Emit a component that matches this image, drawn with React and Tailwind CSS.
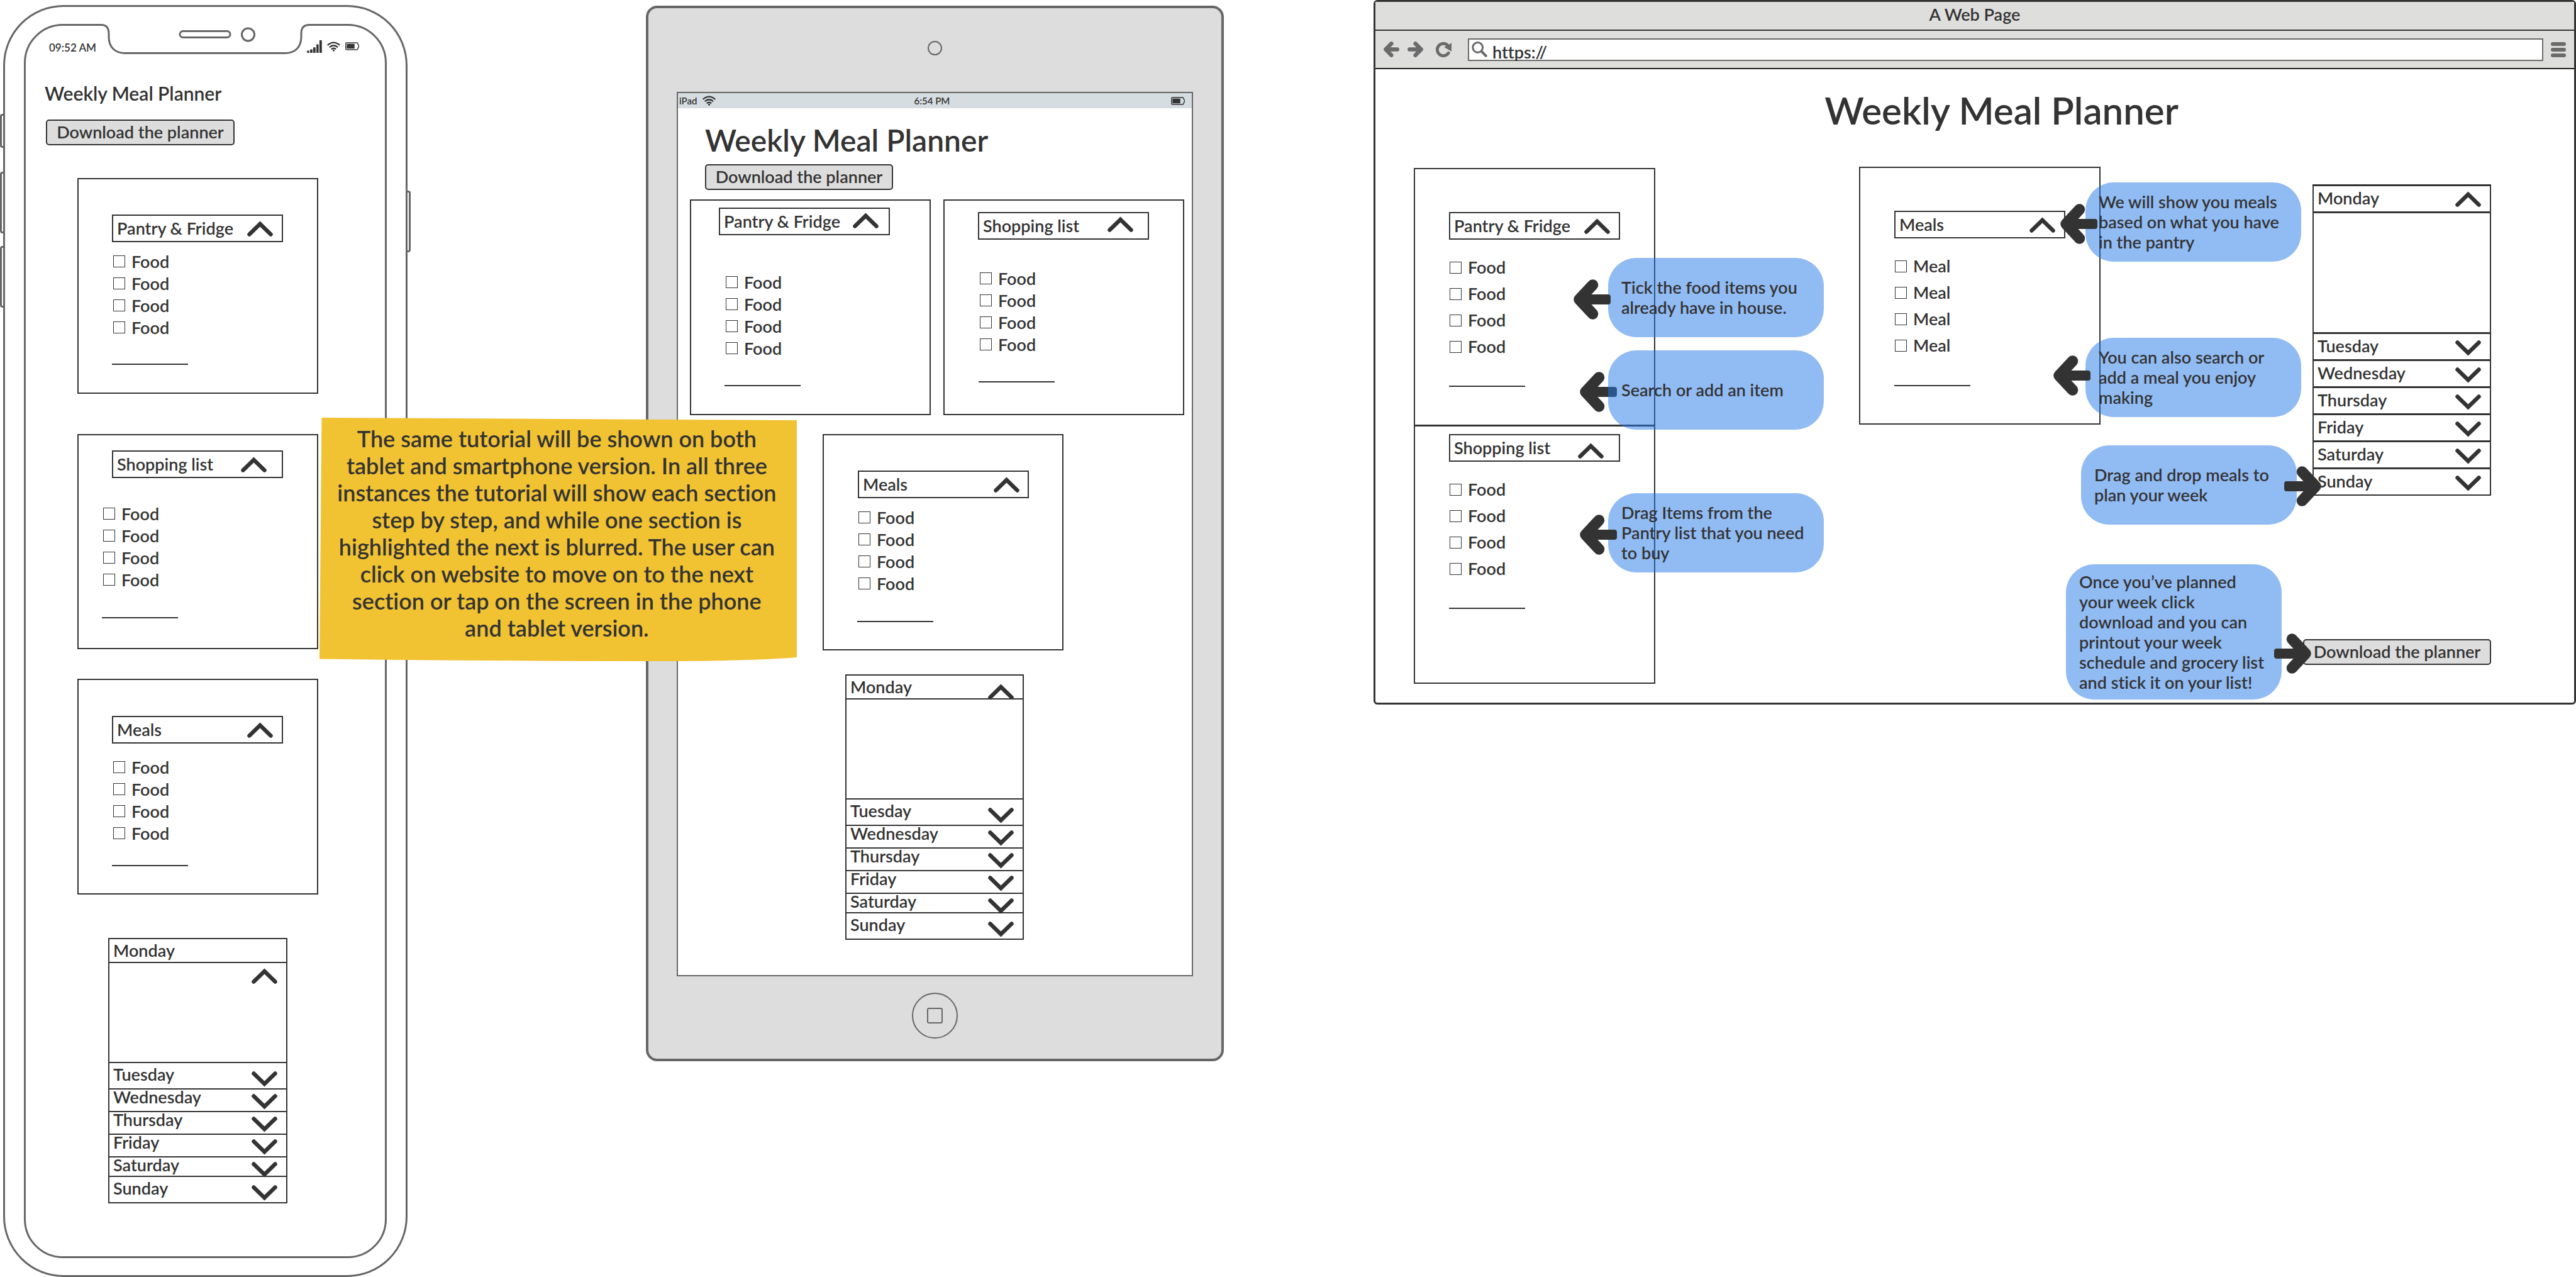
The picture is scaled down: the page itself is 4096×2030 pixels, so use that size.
const DAYS = ["Tuesday", "Wednesday", "Thursday", "Friday", "Saturday", "Sunday"];
const FOOD = ["Food", "Food", "Food", "Food"];
const MEAL = ["Meal", "Meal", "Meal", "Meal"];

/* ---------- drawings ---------- */

function Chevron({ up, className = "" }) {
  return (
    <svg viewBox="0 0 41 25" className={`h-[25px] w-[41px] shrink-0 ${className}`} aria-hidden="true">
      <polyline
        points={up ? "3.5,21.5 20.5,5 37.5,21.5" : "3.5,3.5 20.5,20 37.5,3.5"}
        fill="none"
        stroke="#333"
        strokeWidth="6.5"
        strokeLinecap="round"
      />
    </svg>
  );
}

function BigArrow({ right, className = "" }) {
  return (
    <svg viewBox="0 0 60 64" className={`h-16 w-[60px] shrink-0 ${className}`} aria-hidden="true">
      <g transform={right ? "translate(60 0) scale(-1 1)" : undefined}>
        <polyline points="31.5,9 10,32 31.5,55" fill="none" stroke="#333" strokeWidth="17.5" strokeLinecap="round" strokeLinejoin="round" />
        <rect x="14" y="24" width="46" height="16" rx="4" fill="#333" />
      </g>
    </svg>
  );
}

function NavArrow({ right }) {
  return (
    <svg viewBox="0 0 97 97" className="size-[25px]" aria-hidden="true">
      <g transform={right ? "translate(97 0) scale(-1 1)" : undefined} fill="none" stroke="#6b6b6b" strokeWidth="25" strokeLinecap="round" strokeLinejoin="round">
        <polyline points="48,13 13,48.5 48,84" />
        <line x1="16" y1="48.5" x2="84" y2="48.5" />
      </g>
    </svg>
  );
}

function Reload() {
  return (
    <svg viewBox="0 0 98 97" className="size-[25px]" aria-hidden="true">
      <path d="M70 20 A38 38 0 1 0 79 71" fill="none" stroke="#6b6b6b" strokeWidth="19" strokeLinecap="round" />
      <polygon points="98,8 98,61 52,35" fill="#6b6b6b" />
    </svg>
  );
}

function Search() {
  return (
    <svg viewBox="0 0 98 98" className="size-[25px] shrink-0" aria-hidden="true">
      <circle cx="38" cy="37" r="31" fill="none" stroke="#6b6b6b" strokeWidth="12" />
      <line x1="62" y1="62" x2="89" y2="89" stroke="#6b6b6b" strokeWidth="16" strokeLinecap="round" />
    </svg>
  );
}

function Signal() {
  return (
    <svg viewBox="0 0 92 78" className="h-5 w-6" fill="#333" aria-hidden="true">
      <rect x="0" y="64" width="14" height="14" rx="2" />
      <rect x="19" y="57" width="15" height="21" rx="2" />
      <rect x="38" y="44" width="15" height="34" rx="2" />
      <rect x="58" y="25" width="14" height="53" rx="2" />
      <rect x="77" y="0" width="15" height="78" rx="2" />
    </svg>
  );
}

function Wifi() {
  return (
    <svg viewBox="0 0 83 62" className="h-4 w-[21px]" aria-hidden="true">
      <g fill="none" stroke="#333" strokeWidth="9">
        <path d="M3 23 Q41.5 -11 80 23" />
        <path d="M15 36 Q41.5 12 68 36" />
        <path d="M27 48 Q41.5 35 56 48" />
      </g>
      <circle cx="41.5" cy="55" r="6.5" fill="#333" />
    </svg>
  );
}

function Battery() {
  return (
    <svg viewBox="0 0 88 50" className="h-[13px] w-[22px]" aria-hidden="true">
      <path d="M8 3 H74 Q80 3 80 9 V13 Q85 14 85 19 V31 Q85 36 80 37 V41 Q80 47 74 47 H8 Q3 47 3 42 V8 Q3 3 8 3 Z" fill="none" stroke="#333" strokeWidth="5.5" />
      <rect x="9" y="10" width="50" height="30" fill="#333" />
    </svg>
  );
}

/* ---------- shared parts ---------- */

function DownloadButton({ className = "" }) {
  return (
    <button type="button" className={`flex h-[41px] items-center justify-center rounded-[5px] border-2 border-[#333] bg-[#ddd] pb-0.5 ${className}`}>
      Download the planner
    </button>
  );
}

function Card({ title, items = FOOD, className = "", header = "", chevron = "mr-3.5", list, rows = "h-[35px]", field }) {
  return (
    <section className={`border-2 border-[#333] ${className}`}>
      <button type="button" className={`flex h-11 items-center justify-between border-2 border-[#333] pl-1.5 ${header}`}>
        <span>{title}</span>
        <Chevron up className={chevron} />
      </button>
      <div className={list}>
        {items.map((item, i) => (
          <label key={i} className={`flex w-fit items-center gap-2.5 ${rows}`}>
            <input type="checkbox" className="size-[19px] appearance-none border border-[#333]" />
            {item}
          </label>
        ))}
        <input type="text" aria-label={`Add to ${title}`} className={`block h-7 w-[121px] border-b-2 border-[#333] outline-none ${field}`} />
      </div>
    </section>
  );
}

const TALL = new Set(["Monday", "Tuesday", "Sunday"]);

function DayRow({ day, up, hideChevron }) {
  const tall = TALL.has(day);
  const height = day === "Monday" ? "h-[38px]" : tall ? "h-[42px]" : day === "Saturday" ? "h-[31px]" : "h-9";
  return (
    <button type="button" className={`flex w-full items-start justify-between border-t-2 border-[#333] pr-3.5 pl-1.5 leading-6 ${height} ${tall ? "pt-1.5" : ""}`}>
      <span>{day}</span>
      {!hideChevron && <Chevron up={up} className="mt-[7px]" />}
    </button>
  );
}

function DayList({ className = "", chevronInBody }) {
  return (
    <section className={`border-2 border-t-0 border-[#333] ${className}`}>
      <DayRow day="Monday" up hideChevron={chevronInBody} />
      <div className="flex h-[159px] justify-end border-t-2 border-[#333] pt-2 pr-3.5">{chevronInBody && <Chevron up />}</div>
      {DAYS.map((d) => (
        <DayRow key={d} day={d} />
      ))}
    </section>
  );
}

function Callout({ text, className = "", arrow = "", right, bubble = "min-h-[126px]" }) {
  return (
    <div className={`absolute flex items-center ${className}`}>
      {!right && <BigArrow className={arrow} />}
      <p className={`flex w-[343px] shrink-0 items-center rounded-[45px] bg-[#2378e8]/50 pl-[21px] leading-8 whitespace-pre ${bubble}`}>{text}</p>
      {right && <BigArrow right className={arrow} />}
    </div>
  );
}

/* ---------- devices ---------- */

function Phone() {
  const leftKey = "absolute -left-2 w-2 rounded-l border-[3px] border-[#666] bg-white";
  return (
    <article className="relative mx-[5px] mt-2 rounded-[96px] border-[3px] border-[#666] px-[30px] pt-[27px] pb-[27px]">
      <span className={`${leftKey} top-[170px] h-[54px]`} />
      <span className={`${leftKey} top-[262px] h-[98px]`} />
      <span className={`${leftKey} top-[380px] h-[98px]`} />
      <span className="absolute top-[292px] -right-2 h-[98px] w-[5px] rounded-r border-[3px] border-l-0 border-[#666] bg-white" />
      <div className="relative flex flex-col rounded-[62px] border-[3px] border-[#666] pb-[84px]">
        <svg viewBox="0 0 336 50" className="absolute -top-[3px] left-1/2 h-[50px] w-[336px] -translate-x-1/2" aria-hidden="true">
          <path d="M3 0 H333 V1.5 C324 1.5 320 6 320 15 V21 C320 37 310 46.5 294 46.5 H40 C24 46.5 14 37 14 21 V16 C14 6 10 1.5 2 1.5 Z" fill="#fff" />
          <path d="M0 1.5 H2 C10 1.5 14 6 14 16 V21 C14 37 24 46.5 40 46.5 H294 C310 46.5 320 37 320 21 V15 C320 6 324 1.5 333 1.5 H336" fill="none" stroke="#666" strokeWidth="3" />
          <rect x="127" y="11.5" width="80" height="10" rx="5" fill="#fff" stroke="#666" strokeWidth="3" />
          <circle cx="235.5" cy="17" r="10" fill="#fff" stroke="#666" strokeWidth="3" />
        </svg>
        <div className="mb-[18px] flex h-[69px] items-center justify-between pr-[41px] pl-[37px]">
          <time className="text-[17px]">09:52 AM</time>
          <div className="flex items-center gap-2 pb-1">
            <Signal />
            <Wifi />
            <Battery />
          </div>
        </div>
        <h2 className="ml-[30px] text-[30px] leading-10">Weekly Meal Planner</h2>
        <DownloadButton className="mt-[22px] ml-8 w-[300px] self-start" />
        <Card title="Pantry & Fridge" className="mt-[52px] mr-[106px] ml-[82px] pt-14 pb-11" header="ml-[53px] w-[272px]" list="ml-[55px] mt-[13px]" field="-ml-0.5 mt-3.5" />
        <Card title="Shopping list" className="mt-16 mr-[106px] ml-[82px] pt-6 pb-[47px]" header="ml-[53px] w-[272px]" chevron="mr-6" list="ml-[39px] mt-[39px]" field="-ml-0.5 mt-4" />
        <Card title="Meals" className="mt-[47px] mr-[106px] ml-[82px] pt-[57px] pb-[43px]" header="ml-[53px] w-[272px]" list="ml-[55px] mt-5" field="-ml-0.5 mt-[7px]" />
        <DayList className="mt-[69px] mr-[155px] ml-[131px]" chevronInBody />
      </div>
    </article>
  );
}

function Tablet() {
  return (
    <article className="mt-[9px] flex flex-col rounded-[18px] border-4 border-[#666] bg-[#ddd] px-[45px] pt-[52px] pb-8">
      <span className="size-[23px] self-center rounded-full border-2 border-[#666]" />
      <div className="mt-[58px] flex flex-col border-2 border-[#666] bg-white pb-14">
        <div className="grid h-6 grid-cols-3 items-center bg-[#d6dde0] pr-[11px] pl-0.5 text-[15px] leading-5">
          <span className="flex items-center gap-2">
            iPad <Wifi />
          </span>
          <time className="text-center">6:54 PM</time>
          <span className="flex justify-end">
            <Battery />
          </span>
        </div>
        <h2 className="mt-[21px] ml-[43px] text-[48px] leading-[60px]">Weekly Meal Planner</h2>
        <DownloadButton className="mt-2 ml-[43px] w-[299px] self-start" />
        <div className="mt-[15px] mr-3 ml-[19px] grid grid-cols-2 gap-5">
          <Card title="Pantry & Fridge" className="pt-[11px] pb-11" header="ml-11 w-[272px]" chevron="mr-4 mb-1" list="ml-[55px] mt-[57px]" field="-ml-0.5 mt-[15px]" />
          <Card title="Shopping list" className="pt-[18px] pb-12" header="ml-[53px] w-[272px]" chevron="mr-[23px] mb-1.5" list="ml-[56px] mt-11" field="-ml-0.5 mt-[15px]" />
        </div>
        <Card title="Meals" className="mt-[30px] mr-[204px] ml-[230px] pt-14 pb-[43px]" header="ml-[54px] w-[272px]" chevron="mr-[13px]" list="ml-[55px] mt-[13px]" field="-ml-0.5 mt-4" />
        <DayList className="mt-[38px] mr-[267px] ml-[266px]" />
      </div>
      <button type="button" aria-label="Home" className="mt-[26px] flex size-[73px] items-center justify-center self-center rounded-full border-2 border-[#666]">
        <span className="size-[25px] rounded-[3px] border-2 border-[#666]" />
      </button>
    </article>
  );
}

function BrowserDays() {
  const row = "flex h-[43px] w-full items-center justify-between border-t-[3px] border-[#333] pr-3.5 pl-1.5";
  return (
    <div className="border-2 border-t-0 border-[#333]">
      <button type="button" className={row}>
        <span className="pb-0.5">Monday</span> <Chevron up />
      </button>
      <div className="h-48 border-t-[3px] border-[#333]" />
      {DAYS.map((d) => (
        <button key={d} type="button" className={row}>
          <span className="pb-0.5">{d}</span> <Chevron className="mt-1" />
        </button>
      ))}
    </div>
  );
}

function Browser() {
  return (
    <article className="rounded-md border-[3px] border-[#333]">
      <header className="border-b-2 border-[#231f20] bg-[#dededd]">
        <h1 className="flex h-[46px] items-center justify-center border-b-2 border-[#333] pb-1">A Web Page</h1>
        <div className="flex h-[59px] items-center px-[13px]">
          <button type="button" aria-label="Back">
            <NavArrow />
          </button>
          <button type="button" aria-label="Forward" className="ml-[13px]">
            <NavArrow right />
          </button>
          <button type="button" aria-label="Reload" className="ml-5">
            <Reload />
          </button>
          <label className="mr-3 ml-[26px] flex h-9 flex-1 items-center gap-2 border-2 border-[#6b6b6b] bg-white pl-1">
            <Search />
            <input type="text" aria-label="Address" defaultValue="https://" className="w-full pt-2 leading-7 outline-none" />
          </label>
          <button type="button" aria-label="Menu" className="flex w-6 flex-col gap-[3px]">
            <span className="h-1.5 rounded-[3px] bg-[#6b6b6b]" />
            <span className="h-1.5 rounded-[3px] bg-[#6b6b6b]" />
            <span className="h-1.5 rounded-[3px] bg-[#6b6b6b]" />
          </button>
        </div>
      </header>
      <h2 className="mt-[29px] pl-[85px] text-center text-[60px] leading-[72px]">Weekly Meal Planner</h2>
      <div className="mt-[54px] grid grid-cols-[384fr_324fr_384fr_337fr_284fr] items-start pr-[132px] pb-[30px] pl-[61px]">
        <div className="relative mt-0.5">
          <Card title="Pantry & Fridge" className="pt-[68px] pb-[60px]" header="ml-[54px] w-[272px]" list="ml-[55px] mt-[23px]" rows="h-[42px]" field="-ml-px mt-[15px]" />
          <Card title="Shopping list" className="-mt-px pt-3 pb-[117px]" header="ml-[54px] w-[272px]" chevron="mr-6 mt-2" list="ml-[55px] mt-[23px]" rows="h-[42px]" field="-ml-px mt-[15px]" />
          <Callout className="top-[143px] left-[253px]" arrow="relative z-10 -mr-1 mt-1.5" text={"Tick the food items you\nalready have in house."} />
          <Callout className="top-[290px] left-[263px]" arrow="-mr-3.5 mt-1.5" text="Search or add an item" />
          <Callout className="top-[517px] left-[263px]" arrow="relative z-10 -mr-3.5 mt-1.5" text={"Drag Items from the\nPantry list that you need\nto buy"} />
        </div>
        <div className="relative col-start-3">
          <Card title="Meals" items={MEAL} className="pt-[68px] pb-[59px]" header="ml-[54px] w-[272px]" list="ml-[55px] mt-[23px]" rows="h-[42px]" field="-ml-px mt-4" />
          <Callout className="top-[25px] left-[319px]" arrow="relative z-10 -mr-[19px] mt-1.5" text={"We will show you meals\nbased on what you have\nin the pantry"} />
          <Callout className="top-[272px] left-[308px]" arrow="relative z-10 -mr-2 mb-1.5" text={"You can also search or\nadd a meal you enjoy\nmaking"} />
        </div>
        <div className="relative col-start-5 mt-7">
          <BrowserDays />
          <DownloadButton className="mt-[228px] -ml-[15px] w-[299px]" />
          <Callout right className="top-[415px] -left-[368px]" arrow="-ml-5 mt-1" text={"Drag and drop meals to\nplan your week"} />
          <Callout right className="top-[604px] -left-[392px]" arrow="-ml-3 mt-[68px]" bubble="h-[215px]" text={"Once you’ve planned\nyour week click\ndownload and you can\nprintout your week\nschedule and grocery list\nand stick it on your list!"} />
        </div>
      </div>
    </article>
  );
}

function StickyNote() {
  return (
    <aside className="absolute top-[664px] left-[12.4%] w-[18.53%] pt-3 pb-[31px]">
      <svg viewBox="0 0 759 387" preserveAspectRatio="none" className="absolute inset-0 size-full" aria-hidden="true">
        <path d="M3.5 0 L759 4 V381 Q680 387 540 387 Q250 387 0 383.5 Z" fill="#f1c232" />
      </svg>
      <p className="relative pr-1 text-center text-[36px] leading-[43px] whitespace-pre">
        {"The same tutorial will be shown on both\ntablet and smartphone version. In all three\ninstances the tutorial will show each section\nstep by step, and while one section is\nhighlighted the next is blurred. The user can\nclick on website to move on to the next\nsection or tap on the screen in the phone\nand tablet version."}
      </p>
    </aside>
  );
}

export default function App() {
  return (
    <main className="relative grid min-h-screen grid-cols-[653fr_374fr_919fr_238fr_1912fr] items-start overflow-hidden bg-white font-['Lato',sans-serif] text-[27px] leading-8 font-semibold text-[#333] [font-variant-ligatures:none]">
      <Phone />
      <div className="col-start-3">
        <Tablet />
      </div>
      <div className="col-start-5">
        <Browser />
      </div>
      <StickyNote />
    </main>
  );
}
